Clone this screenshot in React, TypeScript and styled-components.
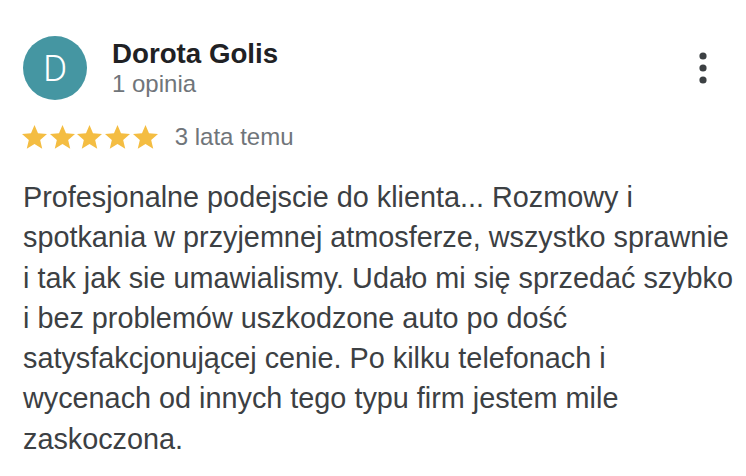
import React from "react";
import styled, { createGlobalStyle } from "styled-components";

const GlobalStyle = createGlobalStyle`
	html, body {
		margin: 0;
		padding: 0;
		background: #ffffff;
	}
	body {
		font-family: "Liberation Sans", Arial, Helvetica, sans-serif;
	}
`;

const Card = styled.div`
	width: 746px;
	box-sizing: border-box;
	padding: 36px 19px 0 23px;
`;

const Header = styled.div`
	display: flex;
	align-items: flex-start;
`;

const Avatar = styled.div<{ $bg: string }>`
	width: 64px;
	height: 64px;
	flex-shrink: 0;
	border-radius: 50%;
	background-color: ${(p) => p.$bg};
	color: #ffffff;
	display: flex;
	align-items: center;
	justify-content: center;
	font-family: Roboto, "Liberation Sans", sans-serif;
	font-size: 37px;
	font-weight: 300;
`;

const Author = styled.div`
	flex: 1;
	margin-left: 25px;
	margin-top: 2px;
	display: flex;
	flex-direction: column;
`;

const Name = styled.div`
	font-size: 27.7px;
	line-height: 32px;
	font-weight: 700;
	color: #202124;
`;

const Meta = styled.div`
	font-size: 24px;
	line-height: 28px;
	color: #70757a;
`;

const MoreButton = styled.button`
	margin-top: 8px;
	width: 48px;
	height: 48px;
	padding: 0;
	border: 0;
	background: transparent;
	color: #3c4043;
	cursor: pointer;
	svg {
		display: block;
	}
`;

const RatingRow = styled.div`
	display: flex;
	align-items: center;
	height: 30px;
	margin-top: 22px;
`;

const Stars = styled.div`
	display: flex;
	gap: 2.7px;
	margin-left: -1px;
	svg {
		display: block;
	}
`;

const When = styled.span`
	margin-left: 17px;
	font-size: 24px;
	line-height: 30px;
	color: #70757a;
`;

const ReviewText = styled.p`
	margin: 25px 0 0;
	width: 712px;
	font-size: 28.8px;
	line-height: 40.3px;
	color: #3c4043;
`;

const Star = () => (
	<svg width="25" height="23.75" viewBox="2 2 20 19" fill="#f4bd42">
		<path d="M12 17.27L18.18 21l-1.64-7.03L22 9.24l-7.19-.61L12 2 9.19 8.63 2 9.24l5.46 4.73L5.82 21z" />
	</svg>
);

const review = {
	author: "Dorota Golis",
	initial: "D",
	color: "#4596a2",
	count: "1 opinia",
	rating: 5,
	when: "3 lata temu",
	text: "Profesjonalne podejscie do klienta... Rozmowy i spotkania w przyjemnej atmosferze, wszystko sprawnie i tak jak sie umawialismy. Udało mi się sprzedać szybko i bez problemów uszkodzone auto po dość satysfakcjonującej cenie. Po kilku telefonach i wycenach od innych tego typu firm jestem mile zaskoczona.",
};

const App: React.FC = () => {
	return (
		<>
			<GlobalStyle />
			<Card>
				<Header>
					<Avatar $bg={review.color}>{review.initial}</Avatar>
					<Author>
						<Name>{review.author}</Name>
						<Meta>{review.count}</Meta>
					</Author>
					<MoreButton type="button" aria-label="Więcej">
						<svg width="48" height="48" viewBox="0 0 24 24" fill="currentColor">
							<circle cx="12" cy="6" r="1.8" />
							<circle cx="12" cy="12" r="1.8" />
							<circle cx="12" cy="18" r="1.8" />
						</svg>
					</MoreButton>
				</Header>
				<RatingRow>
					<Stars>
						{Array.from({ length: review.rating }).map((_, i) => (
							<Star key={i} />
						))}
					</Stars>
					<When>{review.when}</When>
				</RatingRow>
				<ReviewText>{review.text}</ReviewText>
			</Card>
		</>
	);
};

export default App;
